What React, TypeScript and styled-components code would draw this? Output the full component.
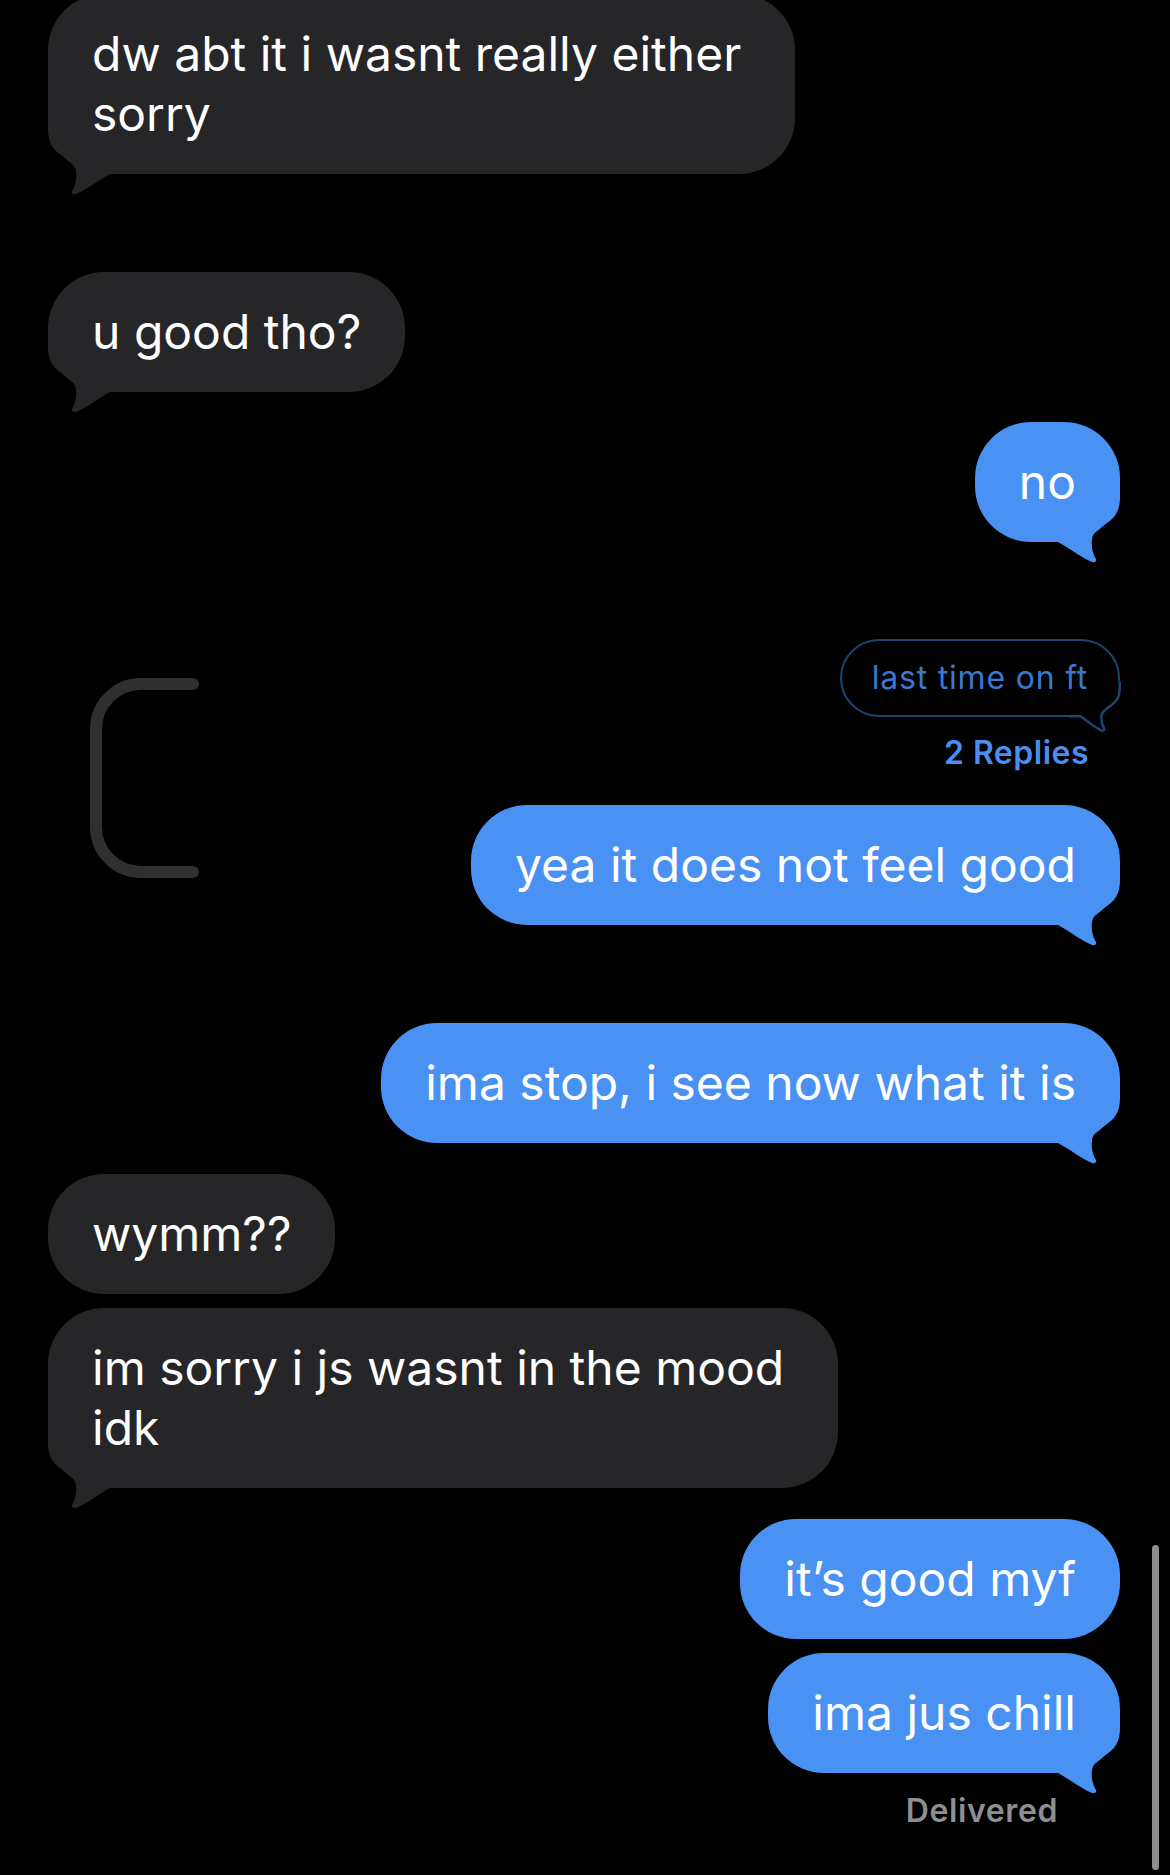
import React from "react";
import styled, { createGlobalStyle } from "styled-components";

const GlobalStyle = createGlobalStyle`
  html, body {
    margin: 0;
    padding: 0;
    background: #000;
  }
  body {
    font-family: Inter, "Liberation Sans", sans-serif;
    -webkit-font-smoothing: antialiased;
  }
`;

type Side = "in" | "out";

interface Msg {
  id: string;
  side: Side;
  lines: string[];
  gap: number;
  tail?: boolean;
}

const before: Msg[] = [
  { id: "m1", side: "in", lines: ["dw abt it i wasnt really either", "sorry"], gap: -6, tail: true },
  { id: "m2", side: "in", lines: ["u good tho?"], gap: 98, tail: true },
  { id: "m3", side: "out", lines: ["no"], gap: 30, tail: true },
];

const after: Msg[] = [
  { id: "m5", side: "out", lines: ["ima stop, i see now what it is"], gap: 98, tail: true },
  { id: "m6", side: "in", lines: ["wymm??"], gap: 31 },
  { id: "m7", side: "in", lines: ["im sorry i js wasnt in the mood", "idk"], gap: 14, tail: true },
  { id: "m8", side: "out", lines: ["it’s good myf"], gap: 31 },
  { id: "m9", side: "out", lines: ["ima jus chill"], gap: 14, tail: true },
];

// tail drawn in a 80x78 box, bubble bottom-right corner sits at (80, 56)
const TAIL_PATH =
  "M80 0 L80 11 C80 26 74 32 67 37 C60 42 53 46 52 53 C51 61 53 68 56 73 C57 75 55 77 52 76 C44 73 32 64 18 56 L0 56 L0 0 Z";
// same shape for the outlined reply bubble, pulled in by half the border
const OUTLINE_PATH =
  "M78 0 L78 11 C78 26 72 32 65 37 C58 42 51 46 50 53 C49 61 51 68 54 73 C55 75 53 77 50 76 C42 73 30 63 18 54 L0 54";

const colors = {
  in: "#262629",
  out: "#4a91f4",
};

const Page = styled.div`
  position: relative;
  width: 1170px;
  height: 1875px;
  overflow: hidden;
  display: flex;
  flex-direction: column;
  padding: 0 50px 0 48px;
  box-sizing: border-box;
  background: #000;
`;

const Row = styled.div<{ $side: Side; $gap: number }>`
  display: flex;
  justify-content: ${(p) => (p.$side === "out" ? "flex-end" : "flex-start")};
  margin-top: ${(p) => p.$gap}px;
`;

const Bubble = styled.div<{ $side: Side; $multi?: boolean }>`
  position: relative;
  background: ${(p) => colors[p.$side]};
  color: #fff;
  font-size: 48px;
  line-height: 60px;
  padding: 30px ${(p) => (p.$multi ? 54 : 44)}px 30px 44px;
  border-radius: 56px;
  white-space: nowrap;
`;

const BubbleText = styled.span`
  position: relative;
`;

const TailSvg = styled.svg<{ $side: Side }>`
  position: absolute;
  bottom: -22px;
  ${(p) => (p.$side === "out" ? "right: 0;" : "left: 0; transform: scaleX(-1);")}
  pointer-events: none;
`;

const Thread = styled.div`
  display: flex;
  justify-content: space-between;
  align-items: flex-start;
  margin-top: 97px;
`;

const BracketSvg = styled.svg`
  margin-top: 39px;
  margin-left: 42px;
  flex-shrink: 0;
`;

const ThreadColumn = styled.div`
  display: flex;
  flex-direction: column;
  align-items: flex-end;
`;

const ReplyBubble = styled.div`
  position: relative;
  border: 2.5px solid #1e4470;
  border-radius: 40px;
  padding: 18px 30px;
  font-size: 32px;
  line-height: 38px;
  letter-spacing: 0.8px;
  color: #3a78d0;
  white-space: nowrap;
`;

const ReplyTail = styled.svg`
  position: absolute;
  right: -2.5px;
  bottom: -16.5px;
  pointer-events: none;
`;

const RepliesLink = styled.div`
  margin-top: 17px;
  margin-right: 31px;
  font-size: 32px;
  line-height: 38px;
  letter-spacing: 0.5px;
  font-weight: 600;
  color: #4b8ef0;
`;

const Status = styled.div`
  align-self: flex-end;
  margin-top: 19px;
  margin-right: 62px;
  font-size: 32px;
  line-height: 38px;
  letter-spacing: 0.6px;
  font-weight: 600;
  color: #8e8e93;
`;

const ScrollBar = styled.div`
  position: absolute;
  right: 11px;
  top: 1545px;
  width: 7px;
  height: 325px;
  border-radius: 4px;
  background: #8e8e8e;
`;

const Tail = ({ side }: { side: Side }) => (
  <TailSvg $side={side} width="80" height="78" viewBox="0 0 80 78">
    <path d={TAIL_PATH} fill={colors[side]} />
  </TailSvg>
);

const Message = ({ msg }: { msg: Msg }) => (
  <Row $side={msg.side} $gap={msg.gap}>
    <Bubble $side={msg.side} $multi={msg.lines.length > 1}>
      {msg.tail && <Tail side={msg.side} />}
      <BubbleText>
        {msg.lines.map((l, i) => (
          <React.Fragment key={i}>
            {i > 0 && <br />}
            {l}
          </React.Fragment>
        ))}
      </BubbleText>
    </Bubble>
  </Row>
);

const Bracket = () => (
  <BracketSvg width="110" height="200" viewBox="0 0 110 200">
    <path
      d="M103 6 H51 A45 45 0 0 0 6 51 V149 A45 45 0 0 0 51 194 H103"
      fill="none"
      stroke="#2f2f31"
      strokeWidth="12"
      strokeLinecap="round"
    />
  </BracketSvg>
);

export default function App() {
  return (
    <>
      <GlobalStyle />
      <Page>
        {before.map((m) => (
          <Message key={m.id} msg={m} />
        ))}

        <Thread>
          <Bracket />
          <ThreadColumn>
            <ReplyBubble>
              <ReplyTail width="52" height="51" viewBox="0 0 80 78">
                <path d={OUTLINE_PATH + " L0 0 Z"} fill="#000" />
                <path d={OUTLINE_PATH} fill="none" stroke="#1e4470" strokeWidth="3.8" />
              </ReplyTail>
              <BubbleText>last time on ft</BubbleText>
            </ReplyBubble>
            <RepliesLink>2 Replies</RepliesLink>
            <Row $side="out" $gap={33}>
              <Bubble $side="out">
                <Tail side="out" />
                <BubbleText>yea it does not feel good</BubbleText>
              </Bubble>
            </Row>
          </ThreadColumn>
        </Thread>

        {after.map((m) => (
          <Message key={m.id} msg={m} />
        ))}

        <Status>Delivered</Status>
        <ScrollBar />
      </Page>
    </>
  );
}
